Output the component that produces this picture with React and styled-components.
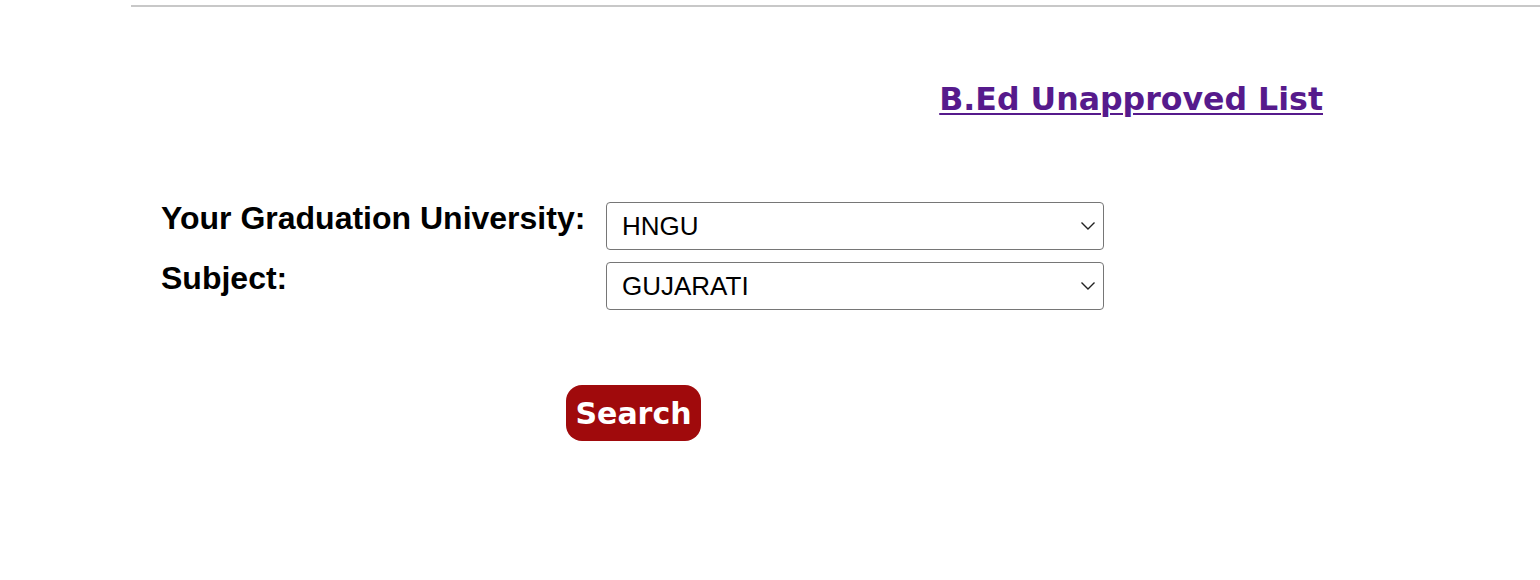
import React, { useState } from "react";
import styled, { createGlobalStyle } from "styled-components";

const GlobalStyle = createGlobalStyle`
  body {
    margin: 0;
    background: #fff;
    font-family: "Liberation Sans", Arial, sans-serif;
  }
`;

const Page = styled.div`
  width: 1540px;
  height: 580px;
  overflow: hidden;
`;

const TopRule = styled.hr`
  margin: 5px 0 0 131px;
  border: none;
  border-top: 2px solid #c8c8c8;
  height: 0;
`;

const LinkRow = styled.div`
  display: flex;
  justify-content: flex-end;
  padding: 74px 217px 0 0;
`;

const ListLink = styled.a`
  font-family: "DejaVu Sans", Verdana, sans-serif;
  font-weight: bold;
  font-size: 31.6px;
  line-height: 36px;
  color: #561a8c;
  text-decoration: underline;
  text-underline-offset: 3px;
  text-decoration-thickness: 2px;
`;

const Form = styled.div`
  display: grid;
  grid-template-columns: 445px 498px;
  row-gap: 10px;
  padding: 83px 0 0 161px;
`;

const Label = styled.label`
  font-family: "Liberation Sans", Arial, sans-serif;
  font-weight: bold;
  font-size: 32px;
  color: #000;
  line-height: 36px;
`;

const SelectWrap = styled.div`
  position: relative;
  height: 48px;
  margin-top: 2px;
`;

const Select = styled.select`
  appearance: none;
  width: 100%;
  height: 48px;
  border: 1px solid #767676;
  border-radius: 4px;
  background: #fff;
  font-family: "Liberation Sans", Arial, sans-serif;
  font-size: 26px;
  color: #000;
  padding: 0 40px 0 15px;
  outline: none;
`;

const Chevron = styled.svg`
  position: absolute;
  right: 8px;
  top: 19px;
  pointer-events: none;
`;

const ButtonRow = styled.div`
  padding: 75px 0 0 566px;
`;

const SearchButton = styled.button`
  width: 135px;
  height: 56px;
  border: none;
  border-radius: 16px;
  background: #a00a0c;
  color: #fff;
  font-family: "DejaVu Sans", Verdana, sans-serif;
  font-weight: bold;
  font-size: 30px;
  padding: 0;
  cursor: pointer;
`;

const Dropdown = ({ value, options, onChange }) => (
  <SelectWrap>
    <Select value={value} onChange={e => onChange(e.target.value)}>
      {options.map(o => (
        <option key={o}>{o}</option>
      ))}
    </Select>
    <Chevron width="16" height="10" viewBox="0 0 16 10">
      <path d="M1.5 1.5 L8 8 L14.5 1.5" fill="none" stroke="#222" strokeWidth="1.4" />
    </Chevron>
  </SelectWrap>
);

const App = () => {
  const [university, setUniversity] = useState("HNGU");
  const [subject, setSubject] = useState("GUJARATI");

  return (
    <Page>
      <GlobalStyle />
      <TopRule />
      <LinkRow>
        <ListLink href="#">B.Ed Unapproved List</ListLink>
      </LinkRow>
      <Form>
        <Label>Your Graduation University:</Label>
        <Dropdown
          value={university}
          options={["HNGU", "GU", "SPU", "MSU", "VNSGU"]}
          onChange={setUniversity}
        />
        <Label>Subject:</Label>
        <Dropdown
          value={subject}
          options={["GUJARATI", "ENGLISH", "HINDI", "SANSKRIT", "MATHS"]}
          onChange={setSubject}
        />
      </Form>
      <ButtonRow>
        <SearchButton>Search</SearchButton>
      </ButtonRow>
    </Page>
  );
};

export default App;
